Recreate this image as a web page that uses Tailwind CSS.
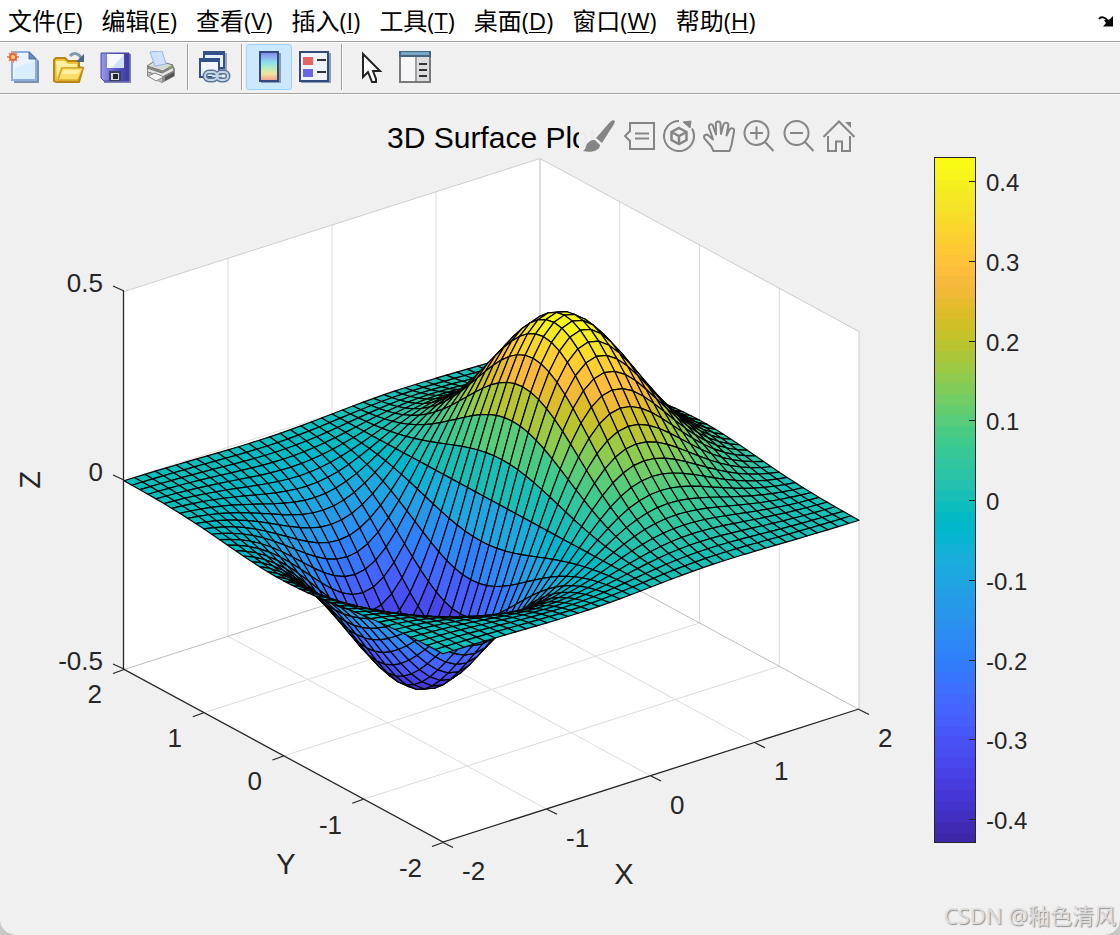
<!DOCTYPE html>
<html lang="zh-CN">

<head>
    <meta charset="UTF-8" />
    <meta name="viewport" content="width=device-width, initial-scale=1.0" />
    <title>Figure 1</title>
    <script src="https://cdn.jsdelivr.net/npm/@tailwindcss/browser@4"></script>
</head>

<body class="bg-[#c8c8c8] font-['Liberation_Sans','Noto_Sans_CJK_SC',sans-serif]">
    <main class="relative min-h-screen overflow-hidden rounded-b-2xl border-b border-[#b8b8b8] bg-[#f0f0f0]">
        <!-- Menu bar -->
        <nav
            class="flex h-[42px] items-center gap-[19px] border-b border-[#a0a0a0] bg-white pl-2 pr-[6px] text-2xl text-black font-['Open_Sans','Noto_Sans_CJK_SC',sans-serif]">
            <button>文件(<span class="underline decoration-1 underline-offset-2">F</span>)</button>
            <button>编辑(<span class="underline decoration-1 underline-offset-2">E</span>)</button>
            <button>查看(<span class="underline decoration-1 underline-offset-2">V</span>)</button>
            <button>插入(<span class="underline decoration-1 underline-offset-2">I</span>)</button>
            <button>工具(<span class="underline decoration-1 underline-offset-2">T</span>)</button>
            <button>桌面(<span class="underline decoration-1 underline-offset-2">D</span>)</button>
            <button>窗口(<span class="underline decoration-1 underline-offset-2">W</span>)</button>
            <button>帮助(<span class="underline decoration-1 underline-offset-2">H</span>)</button>
            <button class="ml-auto" aria-label="Dock figure">
                <svg class="h-3 w-4" viewBox="0 0 16 12">
                    <path d="M1 4C3 1 7 2 10 6" fill="none" stroke="#000" stroke-width="2" />
                    <path d="M15 1V11.500H5L8 8L6 5L10 5L12 4Z" />
                </svg>
            </button>
        </nav>

        <!-- Toolbar -->
        <div class="flex h-[53px] items-start border-b border-t border-white bg-[#f0f0f0]">
            <div class="flex h-[51px] w-full items-center border-b border-[#a0a0a0] pb-[2px]">
                <button class="flex h-[46px] w-[46px] items-center justify-center" aria-label="New">
                    <svg class="h-8 w-8" viewBox="0 0 32 32">
                        <path d="M7 3H25L32 10V32H7Z" fill="#8190ad" />
                        <path d="M5 1H22L29 8V29H5Z" fill="#e8f4ff" stroke="#8aaee0" stroke-width="2" />
                        <path d="M8 17L28 10V28H8Z" fill="#d8edff" />
                        <path d="M22 1V8H29Z" fill="#7189b9" stroke="#556c9e" />
                        <path d="M6 0V12M0 6H12M2 2L10 10M10 2L2 10" stroke="#ec956f" stroke-width="2" />
                        <circle cx="6" cy="6" r="3" fill="#ffd07a" stroke="#e3683e" stroke-width="2" />
                    </svg>
                </button>
                <button class="flex h-[46px] w-[46px] items-center justify-center" aria-label="Open">
                    <svg class="h-8 w-8" viewBox="0 0 32 32">
                        <path d="M1 30V9L3 7H12L15 10H26V16L30 17L26 31H3Z" fill="#edc33e" stroke="#b98517" stroke-width="2" />
                        <path d="M3 10H12L15 13H24V16H8L4 27Z" fill="#fff0a0" />
                        <path d="M9 17H30L25 29H5Z" fill="#fbdd67" stroke="#c79720" />
                        <path d="M10 19H27L25 23H9Z" fill="#fff1a5" />
                        <path d="M17 5C20 1 26 2 28 7" fill="none" stroke="#8298ae" stroke-width="3" />
                        <path d="M31 3V11H23Z" fill="#496782" />
                    </svg>
                </button>
                <button class="flex h-[46px] w-[46px] items-center justify-center" aria-label="Save">
                    <svg class="h-8 w-8" viewBox="0 0 32 32">
                        <defs>
                            <linearGradient id="disk" x1="0" y1="0" x2="1" y2="0">
                                <stop offset="0" stop-color="#9b9be8" />
                                <stop offset=".5" stop-color="#5b5bd0" />
                                <stop offset="1" stop-color="#3a3a99" />
                            </linearGradient>
                        </defs>
                        <path d="M4 3H32V32H5Z" fill="#7f85b5" />
                        <path d="M2 2H30V30H5L2 27Z" fill="url(#disk)" stroke="#4747a8" />
                        <path d="M8 3H25V17H8Z" fill="#f5faff" />
                        <path d="M25 3V17H13Z" fill="#cfe2f8" />
                        <path d="M10 20H22V30H10Z" fill="#3c4058" />
                        <path d="M12 22H20V29H12Z" fill="#d5d8dd" />
                        <path d="M14 23H19V28H14Z" fill="#22252e" />
                    </svg>
                </button>
                <button class="flex h-[46px] w-[46px] items-center justify-center" aria-label="Print">
                    <svg class="h-8 w-8" viewBox="0 0 32 32">
                        <path d="M2 15L10 10L28 14L30 18V25L17 32L2 25Z" fill="#8b8b8b" />
                        <path d="M2 15L11 9L28 14L18 20Z" fill="#d8d8d8" stroke="#777" />
                        <path d="M5 1L17 0L21 13L10 15Z" fill="#cfe1fb" stroke="#93b5e5" />
                        <path d="M3 17L17 22L28 16V20L17 26L3 21Z" fill="#e4e4e4" />
                        <path d="M3 21L17 26V31L3 25Z" fill="#c4c4c4" />
                        <path d="M2 17L17 22L29 16M3 21L17 26L29 20" fill="none" stroke="#777" />
                        <path d="M3 25L10 22L19 26L11 30Z" fill="#f5f5f5" stroke="#888" />
                        <path d="M20 26L29 21V25L20 30Z" fill="#555" />
                        <path d="M24 17L27 15" stroke="#83b547" stroke-width="2" />
                    </svg>
                </button>

                <div class="mx-[3px] h-[46px] w-[2px] border-l border-[#a0a0a0] bg-white"></div>

                <button class="flex h-[46px] w-[46px] items-center justify-center" aria-label="Link plot">
                    <svg class="h-8 w-8" viewBox="0 0 32 32">
                        <path d="M6 2H28V19H6Z" fill="#9aa4b8" />
                        <path d="M5 1H25V17H5Z" fill="#e6f0fc" stroke="#33508a" stroke-width="2" />
                        <path d="M4 0H26V4H4Z" fill="#33508a" />
                        <path d="M1 8H20V26H1Z" fill="#f1f6ff" stroke="#33508a" stroke-width="2" />
                        <path d="M0 7H21V11H0Z" fill="#33508a" />
                        <g fill="none" stroke-width="5" stroke="#5d7795">
                            <rect x="6" y="21" width="12" height="8" rx="4" />
                            <rect x="18" y="21" width="11" height="8" rx="4" />
                            <path d="M13 25H23" />
                        </g>
                        <g fill="none" stroke-width="2" stroke="#c4d6ea">
                            <rect x="6" y="21" width="12" height="8" rx="4" />
                            <rect x="18" y="21" width="11" height="8" rx="4" />
                            <path d="M13 25H23" />
                        </g>
                    </svg>
                </button>

                <div class="mx-[3px] h-[46px] w-[2px] border-l border-[#a0a0a0] bg-white"></div>

                <button
                    class="flex h-[46px] w-[46px] items-center justify-center rounded-[3px] border border-[#99d1ff] bg-[#cce8ff]"
                    aria-label="Insert colorbar" aria-pressed="true">
                    <svg class="h-8 w-8" viewBox="0 0 32 32">
                        <defs>
                            <linearGradient id="rainbow" x1="0" y1="0" x2="0" y2="1">
                                <stop offset="0" stop-color="#8585e5" />
                                <stop offset=".35" stop-color="#8cdcf0" />
                                <stop offset=".55" stop-color="#b5edc0" />
                                <stop offset=".75" stop-color="#f5e39b" />
                                <stop offset="1" stop-color="#f29a8c" />
                            </linearGradient>
                        </defs>
                        <path d="M8 2H28V32H8Z" fill="#8a9bb5" />
                        <path d="M7 1H25V30H7Z" fill="url(#rainbow)" stroke="#33487c" stroke-width="2" />
                    </svg>
                </button>
                <button class="flex h-[46px] w-[46px] items-center justify-center" aria-label="Insert legend">
                    <svg class="h-8 w-8" viewBox="0 0 32 32">
                        <path d="M2 2H32V32H2Z" fill="#8a9bb5" />
                        <path d="M1 1H29V30H1Z" fill="#eef3fc" stroke="#33487c" stroke-width="2" />
                        <path d="M4 6H14V14H4Z" fill="#e46464" />
                        <path d="M4 18H14V26H4Z" fill="#6868e2" />
                        <path d="M18 9H27M18 21H27" stroke="#333" stroke-width="2" />
                    </svg>
                </button>

                <div class="mx-[3px] h-[46px] w-[2px] border-l border-[#a0a0a0] bg-white"></div>

                <button class="flex h-[46px] w-[46px] items-center justify-center" aria-label="Edit plot">
                    <svg class="h-8 w-8" viewBox="0 0 32 32">
                        <path d="M10 3V26L15 21L19 31H23V28L20 20H27Z" fill="#fff" stroke="#222" stroke-width="2" />
                    </svg>
                </button>
                <button class="flex h-[46px] w-[46px] items-center justify-center" aria-label="Property inspector">
                    <svg class="h-8 w-8" viewBox="0 0 32 32">
                        <path d="M1 1H31V31H1Z" fill="#dcdcdc" stroke="#77797d" stroke-width="2" />
                        <path d="M2 6H16V30H2Z" fill="#f6f6f6" />
                        <path d="M0 0H32V6H0Z" fill="#45647f" />
                        <path d="M2 1H30V4H2Z" fill="#78a7c5" />
                        <path d="M17 6V30" stroke="#a0a0a4" stroke-width="2" />
                        <path d="M20 13H28M20 19H28M20 25H28" stroke="#333" stroke-width="2" />
                    </svg>
                </button>
            </div>
        </div>

        <!-- Figure -->
        <section class="relative">
            <svg class="block h-auto w-full" viewBox="0 95 1120 840" role="img" aria-label="3D Surface Plot">
                <text x="387" y="148" class="fill-black text-[30px]">3D Surface Plot</text>

                <path d="M124 291L540 158L859 332V709L443 842L124 669Z" fill="#fff" />
                <g id="grid" fill="none"></g>
                <g id="surface" stroke="#000" stroke-width="1.2" stroke-linejoin="round"></g>
                <g id="axes" fill="none" stroke="#262626" stroke-width="1.3">
                    <path d="M123.500 291V669L443 842L859 709" />
                </g>
                <g id="labels" class="fill-[#262626] text-[26px]"></g>

                <g class="fill-[#262626] text-[29px]" text-anchor="middle">
                    <text x="624" y="884">X</text>
                    <text x="286" y="874">Y</text>
                    <text x="0" y="0" transform="translate(40 480) rotate(-90)">Z</text>
                </g>

                <g id="colorbar" shape-rendering="crispEdges"></g>
                <g id="colorbar-labels" class="fill-[#262626] text-2xl"></g>
            </svg>

            <!-- Axes toolbar -->
            <div class="absolute right-[261px] top-[21px] flex bg-[#f0f0f0]/98 text-[#858585]">
                <button class="flex h-10 w-10 items-center justify-center" aria-label="Brush data">
                    <svg class="h-8 w-8" viewBox="0 0 32 32" fill="currentColor">
                        <path d="M30 0L32 1L31 4L19 23L13 18L27 2Z" />
                        <path d="M0 31C4 29 2 24 6 22C8 20 10 20 12 20L17 25C17 31 8 33 0 31Z" />
                    </svg>
                </button>
                <button class="flex h-10 w-10 items-center justify-center" aria-label="Data tips">
                    <svg class="h-8 w-8" viewBox="0 0 32 32" fill="none" stroke="currentColor" stroke-width="2">
                        <path d="M7 3H31V29H7V21L2 16L7 11ZM12 13.500H26M12 18.500H26" />
                    </svg>
                </button>
                <button class="flex h-10 w-10 items-center justify-center" aria-label="Rotate 3D">
                    <svg class="h-8 w-8" viewBox="0 0 32 32" fill="none" stroke="currentColor" stroke-width="2">
                        <path d="M16 1A15 15 0 1 0 29 8.500" />
                        <path d="M20 2L28 1L27 8Z" fill="currentColor" stroke-width="1" />
                        <path d="M16 8L23.500 12V20L16 24L8.500 20V12ZM8.500 12L16 16L23.500 12M16 16V24" stroke-width="2.500" />
                    </svg>
                </button>
                <button class="flex h-10 w-10 items-center justify-center" aria-label="Pan">
                    <svg class="h-8 w-8" viewBox="0 0 32 32" fill="none" stroke="currentColor" stroke-width="2" stroke-linejoin="round">
                        <path d="M10.500 31L8 26L1.500 18.500C0 15.500 3 13.500 5.500 15.500L10 19.500L6 7.500C5.500 4 9 3 10 6L13 14.500L12.800 4C12.800 .5 17.500 .5 17.500 4L18 14L20.500 4.500C21.500 1.500 26 2.500 25.300 5.500L23.500 15.500L26.500 9.500C28 7 31.800 8.500 31 11.500L28.500 25L26.500 31Z" />
                    </svg>
                </button>
                <button class="flex h-10 w-10 items-center justify-center" aria-label="Zoom in">
                    <svg class="h-8 w-8" viewBox="0 0 32 32" fill="none" stroke="currentColor" stroke-width="2">
                        <circle cx="13.500" cy="13" r="12" />
                        <path d="M22 22L30.500 31M7 13H20M13.500 6.500V19.500" />
                    </svg>
                </button>
                <button class="flex h-10 w-10 items-center justify-center" aria-label="Zoom out">
                    <svg class="h-8 w-8" viewBox="0 0 32 32" fill="none" stroke="currentColor" stroke-width="2">
                        <circle cx="13.500" cy="13" r="12" />
                        <path d="M22 22L30.500 31M7 13H20" />
                    </svg>
                </button>
                <button class="flex h-10 w-10 items-center justify-center" aria-label="Restore view">
                    <svg class="h-8 w-8" viewBox="0 0 32 32" fill="none" stroke="currentColor" stroke-width="2">
                        <path d="M.5 17L16 1.500L31.500 17M5 16V31H13V21.500H19V31H27V16" />
                        <path d="M22 2H28V8Z" fill="currentColor" stroke="none" />
                    </svg>
                </button>
            </div>
        </section>

        <!-- Watermark -->
        <p
            class="absolute bottom-[6px] right-1 text-[22px] leading-7 text-[#dedede] font-['Noto_Sans','Noto_Sans_CJK_SC',sans-serif] [text-shadow:1px_1px_1px_#909090]">
            CSDN @釉色清风</p>
    </main>

    <script>
        // parula, 64 levels
        const parula = [
            [.2422, .1504, .6603], [.2504, .1650, .7076], [.2578, .1818, .7511], [.2647, .1978, .7952],
            [.2706, .2147, .8364], [.2751, .2342, .8710], [.2783, .2559, .8991], [.2803, .2782, .9221],
            [.2813, .3006, .9414], [.2810, .3228, .9579], [.2795, .3447, .9717], [.2760, .3667, .9829],
            [.2699, .3892, .9906], [.2602, .4123, .9952], [.2440, .4358, .9988], [.2206, .4603, .9973],
            [.1963, .4847, .9892], [.1834, .5074, .9798], [.1786, .5289, .9682], [.1764, .5499, .9520],
            [.1687, .5703, .9359], [.1540, .5902, .9218], [.1460, .6091, .9079], [.1380, .6276, .8973],
            [.1248, .6459, .8883], [.1113, .6635, .8763], [.0952, .6798, .8598], [.0689, .6948, .8394],
            [.0297, .7082, .8163], [.0036, .7203, .7917], [.0067, .7312, .7660], [.0433, .7411, .7394],
            [.0964, .7500, .7120], [.1408, .7584, .6842], [.1717, .7670, .6554], [.1938, .7758, .6251],
            [.2161, .7843, .5923], [.2470, .7918, .5567], [.2906, .7973, .5188], [.3406, .8008, .4789],
            [.3909, .8029, .4354], [.4456, .8024, .3909], [.5044, .7993, .3480], [.5616, .7942, .3045],
            [.6174, .7876, .2612], [.6720, .7793, .2227], [.7242, .7698, .1910], [.7738, .7598, .1646],
            [.8203, .7498, .1535], [.8634, .7406, .1596], [.9035, .7330, .1774], [.9393, .7288, .2100],
            [.9728, .7298, .2394], [.9956, .7434, .2371], [.9970, .7659, .2199], [.9952, .7893, .2028],
            [.9892, .8136, .1885], [.9786, .8386, .1766], [.9676, .8639, .1643], [.9610, .8890, .1537],
            [.9597, .9135, .1423], [.9628, .9373, .1265], [.9691, .9606, .1064], [.9769, .9839, .0805]
        ].map(c => `rgb(${c.map(v => Math.round(v * 255)).join(',')})`);

        const zMax = 0.7 * Math.exp(-0.49);
        const f = (x, y) => x * Math.exp(-x * x - y * y);

        function project(x, y, z) {
            return [
                443 + (x + 2) * 104 - (y + 2) * 79.75,
                842.5 - (x + 2) * 33.25 - (y + 2) * 43.25 - (z + 0.5) * 378
            ];
        }

        function add(parent, name, attrs, text) {
            const el = document.createElementNS('http://www.w3.org/2000/svg', name);
            for (const key in attrs) el.setAttribute(key, attrs[key]);
            if (text !== undefined) el.textContent = text;
            document.getElementById(parent).appendChild(el);
        }

        function line(parent, points, stroke) {
            const attrs = { points: points.map(p => p.join()).join(' ') };
            if (stroke) attrs.stroke = stroke;
            add(parent, 'polyline', attrs);
        }

        // grid on the floor and the two back walls
        for (const t of [-1, 0, 1]) {
            line('grid', [project(t, -2, -.5), project(t, 2, -.5), project(t, 2, .5)], '#dcdcdc');
            line('grid', [project(-2, t, -.5), project(2, t, -.5), project(2, t, .5)], '#dcdcdc');
        }
        line('grid', [project(-2, 2, 0), project(2, 2, 0), project(2, -2, 0)], '#dcdcdc');
        line('grid', [project(-2, 2, .5), project(2, 2, .5), project(2, -2, .5), project(2, -2, -.5)], '#cccccc');
        line('grid', [project(-2, 2, -.5), project(2, 2, -.5), project(2, -2, -.5)], '#bdbdbd');
        line('grid', [project(2, 2, -.5), project(2, 2, .5)], '#bdbdbd');

        // surface cells, far to near
        for (let i = 39; i >= 0; i--) {
            for (let j = 39; j >= 0; j--) {
                const x = -2 + i / 10, y = -2 + j / 10;
                const corners = [[x, y], [x + .1, y], [x + .1, y + .1], [x, y + .1]];
                const level = Math.min(63, Math.floor((f(x, y) + zMax) / (2 * zMax) * 64));
                add('surface', 'polygon', {
                    points: corners.map(([a, b]) => project(a, b, f(a, b)).map(v => v.toFixed(2)).join()).join(' '),
                    fill: parula[level]
                });
            }
        }

        // ticks and labels
        for (let k = 0; k < 5; k++) {
            const [xx, xy] = project(k - 2, -2, -.5);
            line('axes', [[xx, xy], [xx + 10, xy + 5]]);
            add('labels', 'text', { x: 462 + k * 104, y: 880 - k * 33.25 }, k - 2);

            const [yx, yy] = project(-2, 2 - k, -.5);
            line('axes', [[yx, yy], [yx - 11, yy + 4]]);
            add('labels', 'text', { x: 102 + k * 80, y: 703 + k * 43.5, 'text-anchor': 'end' }, 2 - k);
        }
        ['0.5', '0', '-0.5'].forEach((label, k) => {
            const zy = 291 + k * 189;
            line('axes', [[124, zy], [113, zy - 5]]);
            add('labels', 'text', { x: 103, y: zy + 1, 'text-anchor': 'end' }, label);
        });

        // colorbar
        parula.forEach((fill, k) => {
            add('colorbar', 'rect', { x: 934, y: 843 - (k + 1) * 10.7, width: 42, height: 11, fill });
        });
        add('colorbar', 'rect', { x: 934.5, y: 157.5, width: 41, height: 685, fill: 'none', stroke: '#262626' });
        for (let k = -4; k <= 4; k++) {
            const y = 500 - k * 79.75;
            add('colorbar', 'path', { d: `M969 ${Math.round(y) + .5}H976`, stroke: '#262626' });
            add('colorbar-labels', 'text', { x: 986, y: Math.round(y) + 10 }, k ? (k / 10).toFixed(1) : '0');
        }
    </script>
</body>

</html>
